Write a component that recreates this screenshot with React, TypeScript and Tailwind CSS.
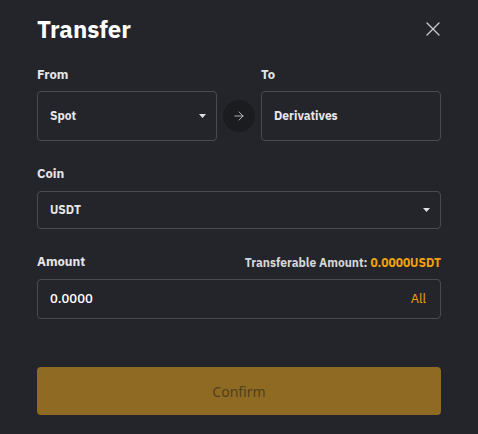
import { X, ArrowRight } from "lucide-react"

function Caret() {
  return (
    <svg width="7" height="4" viewBox="0 0 7 4" className="text-[#e0e1e4]">
      <path d="M0 0h7L3.5 4z" fill="currentColor" />
    </svg>
  )
}

export default function App() {
  return (
    <div
      className="w-[478px] h-[434px] bg-[#24252a] px-[37px] pt-[14px] text-[#e6e7ea]"
      style={{ fontFamily: "'IBM Plex Sans', Inter, 'Noto Sans', sans-serif" }}
    >
      {/* Header */}
      <div className="flex items-center justify-between h-[30px]">
        <h2 className="text-[24px] leading-[30px] font-bold text-white">Transfer</h2>
        <button type="button" className="text-[#c9cacd] -mr-[4px]">
          <X className="w-[24px] h-[24px]" strokeWidth={1.3} />
        </button>
      </div>

      {/* From / To */}
      <div className="mt-[22px] flex items-end">
        <div className="w-[180px]">
          <div className="text-[13px] leading-[18px] font-bold text-[#e4e5e8] mb-[7px]">From</div>
          <div className="h-[50px] rounded-[4px] border border-[#4a4b50] flex items-center justify-between pl-[12px] pr-[10px]">
            <span className="text-[12px] font-bold text-[#e6e7ea]">Spot</span>
            <Caret />
          </div>
        </div>
        <div className="w-[44px] h-[50px] flex items-center justify-center">
          <div className="w-[32px] h-[32px] rounded-full bg-[#1b1c20] flex items-center justify-center text-[#c9cacd]">
            <ArrowRight className="w-[14px] h-[14px]" strokeWidth={1.5} />
          </div>
        </div>
        <div className="w-[180px]">
          <div className="text-[13px] leading-[18px] font-bold text-[#e4e5e8] mb-[7px]">To</div>
          <div className="h-[50px] rounded-[4px] border border-[#4a4b50] flex items-center pl-[12px]">
            <span className="text-[12px] font-bold text-[#e6e7ea]">Derivatives</span>
          </div>
        </div>
      </div>

      {/* Coin */}
      <div className="mt-[24px]">
        <div className="text-[13px] leading-[18px] font-bold text-[#e4e5e8] mb-[8px]">Coin</div>
        <div className="h-[38px] rounded-[4px] border border-[#4a4b50] flex items-center justify-between pl-[12px] pr-[10px]">
          <span className="text-[12px] font-bold text-[#e6e7ea]">USDT</span>
          <Caret />
        </div>
      </div>

      {/* Amount */}
      <div className="mt-[24px]">
        <div className="flex items-end justify-between mb-[8px]">
          <div className="text-[13px] leading-[18px] font-bold text-[#e4e5e8]">Amount</div>
          <div className="text-[12px] leading-[16px] font-bold text-[#d4d5d8]">
            Transferable Amount: <span className="text-[#f0a30f]">0.0000USDT</span>
          </div>
        </div>
        <div className="h-[40px] rounded-[4px] border border-[#4a4b50] flex items-center justify-between pl-[12px] pr-[14px]">
          <span className="text-[13px] font-medium text-white">0.0000</span>
          <span className="text-[13px] text-[#f0a30f]">All</span>
        </div>
      </div>

      {/* Confirm */}
      <button
        type="button"
        disabled
        className="mt-[48px] w-full h-[48px] rounded-[4px] bg-[#8f6a22] text-[14px] text-[#51401c]"
        style={{ fontFamily: "'Noto Sans', sans-serif" }}
      >
        Confirm
      </button>
    </div>
  )
}
